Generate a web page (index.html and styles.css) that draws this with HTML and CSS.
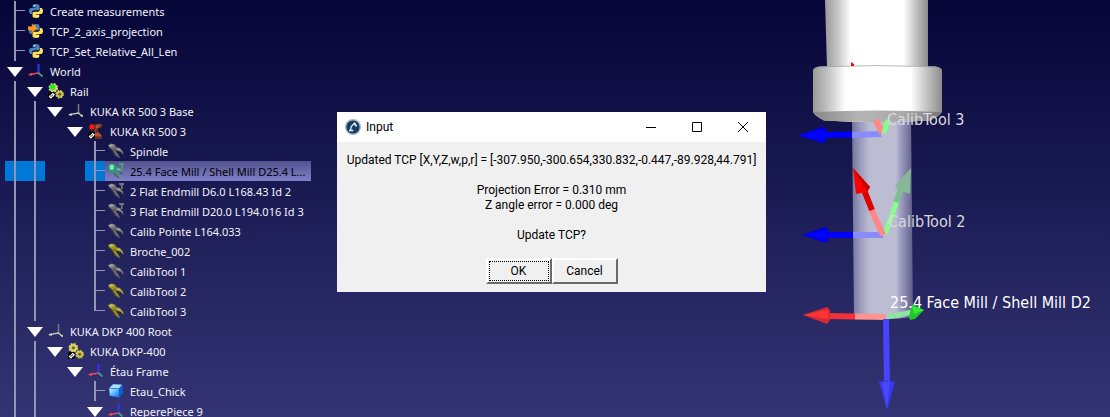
FILE: index.html
```html
<!DOCTYPE html>
<html lang="en">
<head>
<meta charset="utf-8">
<title>Station</title>
<link rel="stylesheet" href="styles.css">
</head>
<body>
<svg class="defs" aria-hidden="true">
  <defs>
    <linearGradient id="steel"><stop offset="0" stop-color="#999"/><stop offset=".12" stop-color="#c4c4c4"/><stop offset=".25" stop-color="#fff"/><stop offset=".76" stop-color="#fff"/><stop offset=".85" stop-color="#d2d2d2"/><stop offset="1" stop-color="#8c8c8c"/></linearGradient>
    <linearGradient id="bevel"><stop offset="0" stop-color="#888"/><stop offset=".35" stop-color="#b4b4b4"/><stop offset=".7" stop-color="#aaa"/><stop offset="1" stop-color="#777"/></linearGradient>
    <linearGradient id="glass"><stop offset="0" stop-color="#74749a"/><stop offset=".12" stop-color="#9696b8"/><stop offset=".28" stop-color="#bbbbd2"/><stop offset=".72" stop-color="#bcbcd2"/><stop offset=".8" stop-color="#9c9cc4"/><stop offset=".92" stop-color="#77779f"/><stop offset="1" stop-color="#5d5d88"/></linearGradient>
    <linearGradient id="cube" x1="0" y1="0" x2="1" y2="1"><stop offset="0" stop-color="#e2f6ff"/><stop offset=".5" stop-color="#58b8ff"/><stop offset="1" stop-color="#1268d8"/></linearGradient>
    <symbol id="py" viewBox="0 0 16 16">
      <path fill="#4584b6" d="M7.800 1C5 1 4.700 2 4.700 3v1.500h3.500v.6H3C1.600 5.100 1 6.500 1 8.100s.7 2.900 1.900 2.900h1.300V9.300C4.200 8 5.200 7.300 6.300 7.300h3.500c1 0 1.700-.8 1.700-1.800V3c0-1.300-1.200-2-3.700-2z"/>
      <path fill="#ffdf55" d="M8.200 15c2.800 0 3.100-1 3.100-2v-1.500H7.800v-.6H13c1.400 0 2-1.400 2-3S14.300 5 13.100 5h-1.300v1.700c0 1.300-1 2-2.100 2H6.200c-1 0-1.700.8-1.700 1.800V13c0 1.300 1.200 2 3.700 2z"/>
      <circle cx="6.200" cy="2.800" r=".7" fill="#fff"/><circle cx="9.700" cy="13.200" r=".7" fill="#fff"/>
    </symbol>
    <symbol id="pyrun" viewBox="0 0 16 16"><use href="#py"/><path fill="#ff9b1c" stroke="#c66b00" stroke-width=".4" d="M0 3.500h4V.7l5.500 4.500L4 9.800V7.200H0z"/></symbol>
    <symbol id="frame" viewBox="0 0 16 16"><path stroke="#3434f4" stroke-width="2" d="M10.500 1v9"/><path stroke="#ee4858" stroke-width="1.600" d="M1 11.700l9.500-1.700"/><path stroke="#38aa70" stroke-width="1.800" d="M10.500 10l4 3.500"/><path fill="#ee4858" d="M0 11.700l4-2v3z"/></symbol>
    <symbol id="base" viewBox="0 0 16 16"><path stroke="#777780" stroke-width="1.600" d="M10.500 1v9"/><path fill="none" stroke="#c8c8bc" stroke-width="1.300" d="M1 11.700l9.500-1.700l4 3.500"/><path fill="#d8d8cc" d="M0 12l4-1.800v2.500zM12 12.800l3 1.200-.5-2.500z"/></symbol>
    <symbol id="gears" viewBox="0 0 16 16">
      <circle cx="5.300" cy="4.800" r="3.900" fill="#d8cf58" stroke="#e2da70" stroke-width="1.800" stroke-dasharray="1.800 1.260"/><circle cx="5.300" cy="4.800" r="1.500" fill="#6b6420"/>
      <circle cx="11.700" cy="11.200" r="3.400" fill="#c4ba44" stroke="#d8cf58" stroke-width="1.700" stroke-dasharray="1.600 1.070"/><circle cx="11.700" cy="11.200" r="1.300" fill="#59531c"/>
      <rect x="0" y="9" width="7" height="7" rx="1.500" fill="#000"/><path fill="none" stroke="#fff" stroke-width="1.200" d="M2.500 12.300l-1 1.300 1.500 1.200 1.600-2M3 12.500l1.600-2 1.500 1.200-1.300 1.600"/>
    </symbol>
    <symbol id="rail" viewBox="0 0 16 16"><use href="#gears"/><circle cx="4.500" cy="4" r="2.700" fill="#19ed32"/></symbol>
    <symbol id="robot" viewBox="0 0 16 16"><path fill="#b8522a" d="M4 2.500l7.500-1.500 2 .5v2.500l-3.500 1-.5 2.500 2 3 2 1.500v3.500H6l.5-3.500 1-2-1.500-3.500z"/><path fill="#6d2c14" d="M7 5l2 .5 1.700 4-2.500.5zM7 13.500h7V15H7zM10 2.500h3v1h-3z"/><circle cx="4" cy="4" r="3.500" fill="#3b2020"/><circle cx="4" cy="4" r="2.500" fill="#ff1818"/><rect x="0" y="9" width="7" height="7" rx="1.500" fill="#000"/><path fill="none" stroke="#fff" stroke-width="1.200" d="M2.500 12.300l-1 1.300 1.500 1.200 1.600-2M3 12.500l1.600-2 1.500 1.200-1.300 1.600"/></symbol>
    <symbol id="tool" viewBox="0 0 16 16"><path fill="currentColor" d="M0 2L3.500.500 7 1.500l1.500 2.800 3.500.7 3 3.500.5 3-1.500-.5-2-2.200-3.500-1.300-.8 1 2.300 2.500 2 4.300-2-.8L6.500 12 5 8.500 1.800 5.500z"/><path fill="#fff" opacity=".4" d="M.8 2.200L3.500 1.300l2.500 1-1.500 1.200-2.700.3zM8.500 5.200l3 .6 1.800 2.200-4-1.500z"/><path fill="none" stroke="#000" opacity=".5" d="M2 5.300l3.500 2.500 2-1.600M6 9.500l1.500 2.700 3 2.600M11.500 9l3 2"/></symbol>
    <symbol id="mill" viewBox="0 0 16 16"><path fill="#75757a" d="M11 0h5v1.500l-1.300 1V6h-1.700V2.500l-2-1z"/><use href="#tool"/></symbol>
    <symbol id="active" viewBox="0 0 16 16"><path fill="#4f9a78" d="M11 0h5v1.500l-1.300 1V6h-1.700V2.500l-2-1z"/><use href="#tool"/><ellipse cx="4.300" cy="5.200" rx="3.700" ry="4.500" fill="#25a06a"/><ellipse cx="3.800" cy="4.200" rx="2.200" ry="2.700" fill="#7ce8bb"/></symbol>
    <symbol id="part" viewBox="0 0 16 16"><path fill="#0c60ce" d="M.8 5L5 .7l9.500.6L15.200 10l-4 5L1.500 13z"/><path fill="url(#cube)" d="M1.300 5.400l9.500.9.300 8-9.200-1.700z"/><path fill="#ade2ff" d="M1.500 4.700L5.300 1.300l8.600.5-3.100 3.800z"/></symbol>
  </defs>
</svg>

<main class="station">
  <nav class="tree" aria-label="Station tree">
    <div class="row"><i class="tee"></i><svg class="icon"><use href="#py"/></svg><span class="name">Create measurements</span></div>
    <div class="row"><i class="tee"></i><svg class="icon"><use href="#pyrun"/></svg><span class="name">TCP_2_axis_projection</span></div>
    <div class="row"><i class="tee"></i><svg class="icon"><use href="#py"/></svg><span class="name">TCP_Set_Relative_All_Len</span></div>
    <div class="row"><button class="toggle" aria-label="Collapse World"></button><svg class="icon"><use href="#frame"/></svg><span class="name">World</span></div>
    <div class="row"><i class="line"></i><button class="toggle" aria-label="Collapse Rail"></button><svg class="icon"><use href="#rail"/></svg><span class="name">Rail</span></div>
    <div class="row"><i class="line"></i><i class="line"></i><button class="toggle" aria-label="Collapse KUKA KR 500 3 Base"></button><svg class="icon"><use href="#base"/></svg><span class="name">KUKA KR 500 3 Base</span></div>
    <div class="row"><i class="line"></i><i class="line"></i><i></i><button class="toggle" aria-label="Collapse KUKA KR 500 3"></button><svg class="icon"><use href="#robot"/></svg><span class="name">KUKA KR 500 3</span></div>
    <div class="row"><i class="line"></i><i class="line"></i><i></i><i></i><i class="tee"></i><svg class="icon"><use href="#tool"/></svg><span class="name">Spindle</span></div>
    <div class="row selected"><i class="line"></i><i class="line"></i><i></i><i></i><i class="tee"></i><span class="pick"><svg class="icon green"><use href="#active"/></svg><span class="name">25.4 Face Mill / Shell Mill D25.4 L...</span></span></div>
    <div class="row"><i class="line"></i><i class="line"></i><i></i><i></i><i class="tee"></i><svg class="icon"><use href="#mill"/></svg><span class="name">2 Flat Endmill D6.0 L168.43 Id 2</span></div>
    <div class="row"><i class="line"></i><i class="line"></i><i></i><i></i><i class="tee"></i><svg class="icon"><use href="#mill"/></svg><span class="name">3 Flat Endmill D20.0 L194.016 Id 3</span></div>
    <div class="row"><i class="line"></i><i class="line"></i><i></i><i></i><i class="tee"></i><svg class="icon"><use href="#tool"/></svg><span class="name">Calib Pointe L164.033</span></div>
    <div class="row"><i class="line"></i><i class="line"></i><i></i><i></i><i class="tee"></i><svg class="icon yellow"><use href="#tool"/></svg><span class="name">Broche_002</span></div>
    <div class="row"><i class="line"></i><i class="line"></i><i></i><i></i><i class="tee"></i><svg class="icon"><use href="#tool"/></svg><span class="name">CalibTool 1</span></div>
    <div class="row"><i class="line"></i><i class="line"></i><i></i><i></i><i class="tee"></i><svg class="icon yellow"><use href="#tool"/></svg><span class="name">CalibTool 2</span></div>
    <div class="row"><i class="line"></i><i class="line"></i><i></i><i></i><i class="tee last"></i><svg class="icon yellow"><use href="#tool"/></svg><span class="name">CalibTool 3</span></div>
    <div class="row"><i class="line"></i><button class="toggle" aria-label="Collapse KUKA DKP 400 Root"></button><svg class="icon"><use href="#base"/></svg><span class="name">KUKA DKP 400 Root</span></div>
    <div class="row"><i class="line"></i><i class="line"></i><button class="toggle" aria-label="Collapse KUKA DKP-400"></button><svg class="icon"><use href="#gears"/></svg><span class="name">KUKA DKP-400</span></div>
    <div class="row"><i class="line"></i><i class="line"></i><i></i><button class="toggle" aria-label="Collapse Étau Frame"></button><svg class="icon"><use href="#frame"/></svg><span class="name">Étau Frame</span></div>
    <div class="row"><i class="line"></i><i class="line"></i><i></i><i></i><i class="tee"></i><svg class="icon"><use href="#part"/></svg><span class="name">Etau_Chick</span></div>
    <div class="row"><i class="line"></i><i class="line"></i><i></i><i></i><button class="toggle" aria-label="Collapse ReperePiece 9"></button><svg class="icon"><use href="#frame"/></svg><span class="name">ReperePiece 9</span></div>
  </nav>

  <section class="view" aria-label="3D view">
    <svg class="scene" viewBox="790 0 320 417" width="320" height="417">
      <path fill="url(#glass)" d="M852 118h59l2 199q-29 4-59 0z"/>
      <path fill="url(#steel)" d="M825 0h103v68H827z"/>
      <path fill="url(#steel)" d="M813 70q1-3 6-3.500 58-2 117 0 5 .5 6 3.500v42q-2 4-12 8.500-53 3-106 0-9-4-11-8.500z"/>
      <path fill="url(#bevel)" d="M814 112q64-3 127 0-2 4-11 8.500-53 3-106 0-8-4-10-8.500z"/>
      <path fill="none" stroke="#999" stroke-width=".7" d="M819 66.800q58-2.500 117 0"/>
      <path fill="red" d="M851 62l3 2v2h-3z"/>

      <g stroke-width="6">
        <path stroke="#8a8aff" d="M852 135l29-1"/><path stroke="#0000fc" d="M823 135l29-.5"/>
        <path fill="#0000e4" d="M798 135.500l25-9 3 3v11l-2 3z"/><path fill="#0202ff" d="M798 135.500l25-6 3 2v7l-3 2z"/>
        <path stroke="#ff8787" d="M876 120l6 13"/><path stroke="#87ff87" stroke-width="5" d="M888 120l-4 13"/>

        <path stroke="#8a8aff" d="M853 235h30"/><path stroke="#0000fc" d="M825 235h28"/>
        <path fill="#0000e4" d="M802 235l23-8 3 2v12l-2 2z"/><path fill="#0202ff" d="M802 235l25-5v9z"/>
        <path stroke="#87ff87" stroke-width="5" d="M885 234l12-33"/><path stroke="#82bd93" d="M896 202l6-15"/><path fill="#86b896" d="M911 168l-16 18 3 4 12 4z"/>
        <path stroke="#ff8787" d="M883 235l-12-26"/><path stroke="#e00000" d="M872 210l-8-20"/><path fill="#f00" d="M853 168l17 19-3 5-11 2z"/><path fill="#ca0000" d="M853 168l17 19-3 5z"/>

        <path stroke="#ff9292" d="M855 316.500l31 .5"/><path stroke="#f53038" d="M828 316l27 .5"/><path fill="#d82934" d="M803 315l24-8 3 3v10l-3 4z"/><path fill="#ff3535" d="M803 315l25-5v9z"/>
        <path stroke="#8ee69e" stroke-width="5" d="M887 317l26-5"/><path fill="#22c52a" d="M912 304l12 6-9 9-5 1-1-3z"/><path fill="#35ec39" d="M912 306l12 4-10 4z"/>
        <path stroke="#4545ff" d="M886 319l1 65"/><path fill="#3838ee" d="M879 382q8-3 16 0l-8 28z"/><path fill="#4848ff" d="M882 382h8l-3 27z"/>
      </g>
      <text class="label dim" x="887" y="125">CalibTool 3</text>
      <text class="label dim" x="888" y="227">CalibTool 2</text>
      <text class="label" x="890" y="308">25.4 Face Mill / Shell Mill D2</text>
    </svg>
  </section>

  <section class="dialog" role="dialog" aria-labelledby="dialog-title">
    <header class="titlebar">
      <svg class="logo" viewBox="0 0 16 16" width="16" height="16"><circle cx="8" cy="8" r="7.300" fill="#163e63" stroke="#a6b9c6" stroke-width="1.400"/><path fill="none" stroke="#e9f1f7" stroke-width="1.300" d="M5.500 11.200l.8-3.700 3-3.200 1.700 2.900"/><path fill="#e9f1f7" d="M4 10.800h4.300v1.400H4zM8.500 3.500l2 .5 1.500 2.700-.8 1.300z"/></svg>
      <h1 class="title" id="dialog-title">Input</h1>
      <button class="caption" aria-label="Minimize"><svg viewBox="0 0 10 10" width="10" height="10"><path d="M0 5.500h10"/></svg></button>
      <button class="caption" aria-label="Maximize"><svg viewBox="0 0 10 10" width="10" height="10"><path d="M.5.500h9v9h-9z"/></svg></button>
      <button class="caption" aria-label="Close"><svg viewBox="0 0 10 10" width="10" height="10"><path d="M0 0l10 10M10 0L0 10"/></svg></button>
    </header>
    <div class="message">
      <p>Updated TCP [X,Y,Z,w,p,r] = [-307.950,-300.654,330.832,-0.447,-89.928,44.791]</p>
      <p>Projection Error = 0.310 mm<br>Z angle error = 0.000 deg</p>
      <p>Update TCP?</p>
      <div class="actions">
        <button class="push focused">OK</button>
        <button class="push">Cancel</button>
      </div>
    </div>
  </section>
</main>
</body>
</html>
```
FILE: styles.css
```css
* {
  box-sizing: border-box;
}

body {
  margin: 0;
  font-family: "Noto Sans", sans-serif;
}

button {
  padding: 0;
  border: 0;
  background: none;
  color: inherit;
  font: inherit;
}

.defs {
  position: absolute;
  width: 0;
  height: 0;
}

.station {
  position: relative;
  display: flex;
  height: 100vh;
  overflow: hidden;
  background: linear-gradient(#050538, #343474);
}

.tree {
  flex: 0 0 311px;
  padding: 1px 0 0 5px;
  color: #f2f2f8;
  font-size: 11px;
  line-height: 20px;
}

.row,
.pick {
  display: flex;
  height: 20px;
  white-space: nowrap;
}

.row i,
.toggle {
  flex: 0 0 20px;
  height: 20px;
}

.line {
  background: linear-gradient(#9494b4, #9494b4) 9px 0 / 2px 20px no-repeat;
}

.tee {
  background:
    linear-gradient(#9494b4, #9494b4) 9px 0 / 2px 20px no-repeat,
    linear-gradient(#9494b4, #9494b4) 11px 9px / 9px 1px no-repeat;
}

.last {
  background-size: 2px 10px, 9px 1px;
}

.toggle {
  display: grid;
  place-items: center;
  padding-top: 2px;
}

.toggle::before {
  content: "";
  width: 16px;
  height: 10px;
  background: #fff;
  clip-path: polygon(0 0, 100% 0, 50% 100%);
}

.icon {
  flex: none;
  width: 16px;
  height: 16px;
  margin: 2px 6px 2px 3px;
  color: #707074;
}

.yellow {
  color: #9b9420;
}

.green {
  color: #469372;
}

.name {
  padding-top: 1px;
}

.selected .line,
.selected .tee {
  background-color: #0078d7;
}

.pick {
  flex: 1;
  background: linear-gradient(#51518d, #8080cb);
  color: #000;
}

.view {
  display: flex;
  flex: 1;
  justify-content: flex-end;
}

.scene {
  flex: none;
}

.label {
  fill: #fff;
  font-family: "DejaVu Sans Condensed", "DejaVu Sans", sans-serif;
  font-size: 16px;
}

.dim {
  fill: #d9d9dc;
}

.dialog {
  position: absolute;
  top: 112px;
  left: 337px;
  width: 429px;
  background: #f0f0f0;
  color: #000;
  font-family: Roboto, "Noto Sans", sans-serif;
  font-size: 12px;
  line-height: 15px;
}

.titlebar {
  display: flex;
  align-items: center;
  height: 30px;
  padding-left: 8px;
  background: #fff;
}

.title {
  flex: 1;
  margin: 0 0 0 5px;
  font-size: 12px;
  font-weight: 400;
}

.caption {
  display: grid;
  place-items: center;
  width: 46px;
  height: 30px;
}

.caption path {
  fill: none;
  stroke: #000;
}

.message {
  display: flex;
  flex-direction: column;
  gap: 15px;
  padding: 11px 8px 8px;
  text-align: center;
  white-space: nowrap;
}

.message p {
  margin: 0;
}

.actions {
  display: flex;
  justify-content: center;
}

.push {
  width: 66px;
  height: 26px;
  border: 2px solid;
  border-color: #fff #696969 #696969 #fff;
  background: #f0f0f0;
}

.focused {
  outline: 1px dotted #000;
  outline-offset: -4px;
}
```
